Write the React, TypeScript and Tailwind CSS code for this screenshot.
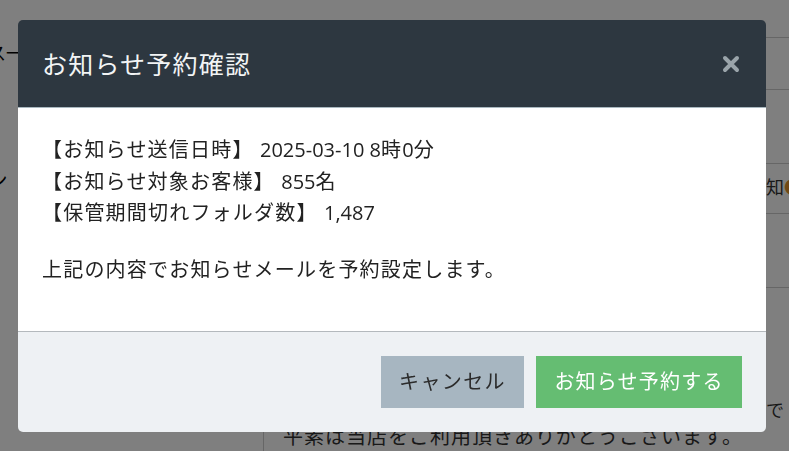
import { useState } from "react";

const font = "font-['Open_Sans','Noto_Sans_CJK_JP',sans-serif]";

const BackgroundPage = () => {
  return (
    <div className={`grid h-[451px] grid-cols-[766px_1fr] overflow-hidden bg-white text-[#333] ${font}`}>
      <div className="flex flex-col">
        <div className="-ml-[65px] mt-[41px] whitespace-nowrap text-[18px] leading-[24px] text-black">
          ニュース一覧
        </div>
        <div className="-ml-[212px] mt-[102px] whitespace-nowrap text-[20px] leading-[28px] text-black">
          お知らせメールデザイン
        </div>
        <div className="ml-[263px] mt-auto h-[31px] border-l border-[#ccc] pl-[19px] text-[20px] leading-[34px] tracking-[1px] whitespace-nowrap">
          平素は当店をご利用頂きありがとうございます。
        </div>
      </div>
      <div className="flex flex-col pt-[37px]">
        <div className="h-[52px] border-t border-[#ccc]" />
        <div className="h-[74px] border-t border-[#ccc]" />
        <div className="h-[50px] border-t border-[#ccc] pt-[10px] text-[18px] leading-[26px] whitespace-nowrap">
          知<span className="text-[#e0902a]">●</span>
        </div>
        <div className="h-[74px] border-t border-[#ccc]" />
        <div className="flex-1 border-t border-[#ccc] pt-[110px] text-[18px] leading-[24px] whitespace-nowrap">
          で
        </div>
      </div>
    </div>
  );
};

const ConfirmModal = () => {
  const [open, setOpen] = useState(true);
  if (!open) return null;

  return (
    <div className="fixed inset-0 bg-black/50">
      <div className={`ml-[18px] mt-[20px] w-[748px] overflow-hidden rounded-[5px] ${font}`}>
        {/* header */}
        <div className="flex h-[88px] items-center justify-between border-b border-[#a9b8c0] bg-[#2d3740] pl-6 pr-[26px]">
          <h2 className="text-[25px] leading-[32px] tracking-[1.2px] text-[#f2f4f5]">お知らせ予約確認</h2>
          <button onClick={() => setOpen(false)} className="text-[#9aa4aa]">
            <svg width="18" height="18" viewBox="0 0 18 18">
              <path d="M3 3 L15 15 M15 3 L3 15" stroke="currentColor" strokeWidth="4" strokeLinecap="round" />
            </svg>
          </button>
        </div>

        {/* body */}
        <div className="bg-white px-6 pb-[46px] pt-[26px] text-[20px] leading-[31.6px] tracking-[1.2px] text-[#222]">
          <p>
            【お知らせ送信日時】 <span className="tracking-normal">2025-03-10 8</span>時
            <span className="tracking-normal">0</span>分
          </p>
          <p>
            【お知らせ対象お客様】 <span className="tracking-normal">855</span>名
          </p>
          <p>
            【保管期間切れフォルダ数】 <span className="tracking-normal">1,487</span>
          </p>
          <p className="mt-[25px]">上記の内容でお知らせメールを予約設定します。</p>
        </div>

        {/* footer */}
        <div className="flex justify-end gap-3 border-t border-[#b4b9bd] bg-[#eef1f4] px-6 py-6">
          <button className="h-[52px] w-[143px] bg-[#a7b6c1] text-[20px] tracking-[1.4px] text-[#2b2b2b]">
            キャンセル
          </button>
          <button className="h-[52px] w-[206px] bg-[#65bd72] text-[20px] tracking-[1.2px] text-white">
            お知らせ予約する
          </button>
        </div>
      </div>
    </div>
  );
};

export default function App() {
  return (
    <div className="relative h-[451px] w-[789px] overflow-hidden">
      <BackgroundPage />
      <ConfirmModal />
    </div>
  );
}
